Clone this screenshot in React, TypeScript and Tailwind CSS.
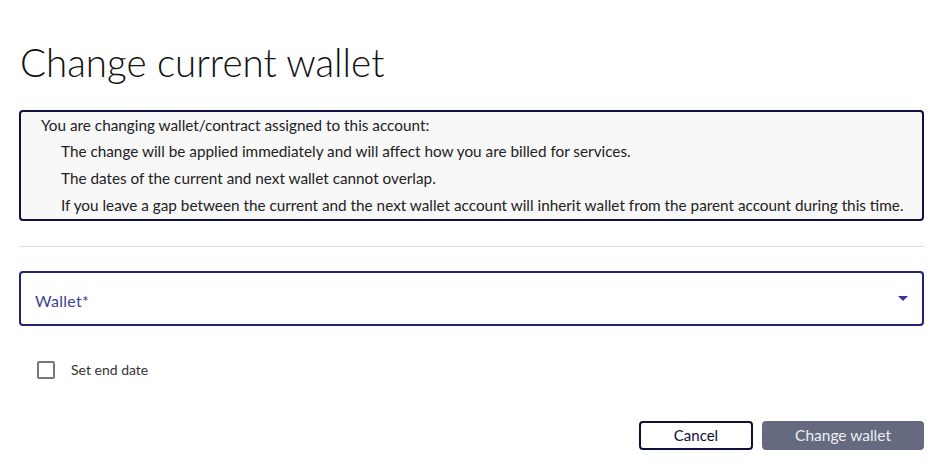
export default function App() {
  return (
    <div className="w-[949px] h-[472px] bg-white pl-[19px] pr-[25px] text-[#1a1a1a]" style={{ fontFamily: "Lato, 'Noto Sans', sans-serif" }}>
      <h1 className="pt-[38px] text-[38.5px] leading-[48px] font-light text-[#111] pl-[1px]">Change current wallet</h1>
      <div className="mt-[24px] border-2 border-[#0d0f3c] rounded-[4px] bg-[#f8f8f8] text-[15.3px] text-[#222]">
        <div className="h-[26px] leading-[26px] pl-[20px]">You are changing wallet/contract assigned to this account:</div>
        <div className="h-[27px] leading-[27px] pl-[40px]">The change will be applied immediately and will affect how you are billed for services.</div>
        <div className="h-[27px] leading-[27px] pl-[40px]">The dates of the current and next wallet cannot overlap.</div>
        <div className="h-[27px] leading-[27px] pl-[40px]">If you leave a gap between the current and the next wallet account will inherit wallet from the parent account during this time.</div>
      </div>
      <div className="mt-[25px] h-px bg-[#e0e0e0]" />
      <div className="mt-[24px] h-[55px] border-2 border-[#1f2278] rounded-[4px] flex items-center justify-between pl-[14px] pr-[14px]">
        <span className="pt-[4px] text-[16px] text-[#3d4297] tracking-[0.3px]">Wallet*</span>
        <svg width="10" height="5" viewBox="0 0 10 5"><path d="M0 0h10L5 5z" fill="#35389a" /></svg>
      </div>
      <div className="mt-[33px] flex items-center pl-[18px]">
        <div className="w-[18px] h-[18px] border-2 border-[#777] rounded-[2px]" />
        <span className="ml-[16px] text-[14px] text-[#333]">Set end date</span>
      </div>
      <div className="mt-[41px] flex justify-end gap-[9px]">
        <button className="w-[114px] h-[29px] border-2 border-[#0d0f3c] rounded-[4px] text-[15px] text-[#0d0f3c] bg-white">Cancel</button>
        <button className="w-[162px] h-[29px] rounded-[4px] bg-[#666a80] text-[15.5px] text-[#eceef4]">Change wallet</button>
      </div>
    </div>
  );
}
